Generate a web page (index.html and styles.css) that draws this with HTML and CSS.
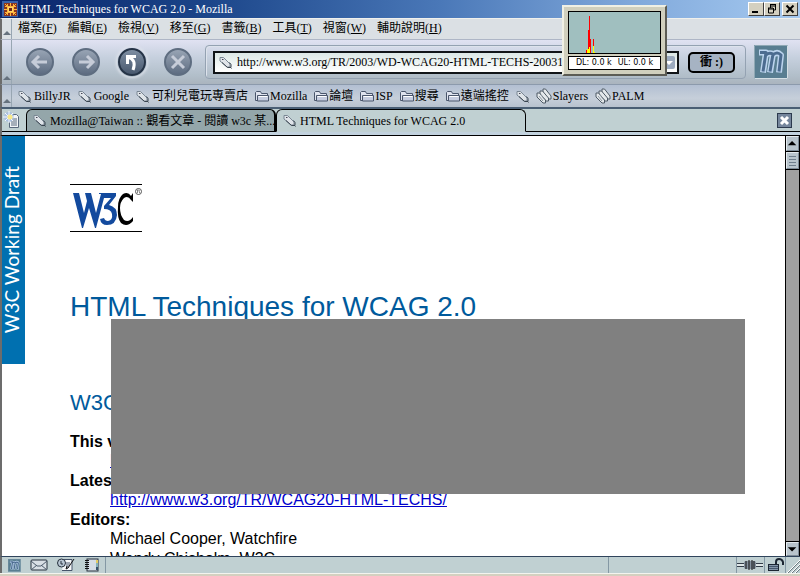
FILE: index.html
```html
<!DOCTYPE html>
<html lang="zh-Hant">
<head>
<meta charset="utf-8">
<title>HTML Techniques for WCAG 2.0 - Mozilla</title>
<link rel="stylesheet" href="styles.css">
</head>
<body>
<svg class="defs" aria-hidden="true">
  <defs>
    <linearGradient id="ball" x1="0" y1="0" x2="0" y2="1"><stop offset="0" stop-color="#9aa6b6"/><stop offset="1" stop-color="#5c6b80"/></linearGradient>
    <linearGradient id="ball-on" x1="0" y1="0" x2="0" y2="1"><stop offset="0" stop-color="#8090a4"/><stop offset="1" stop-color="#46566c"/></linearGradient>
    <symbol id="tag" viewBox="0 0 13 13"><path d="M1 1.500h3.500L11 8v3H8L1 5Z" fill="#dfe4e9" stroke="#7a8794"/><path d="m3 6.500 5.500 5H12V8.500l-1.500-2" fill="none" stroke="#39444f"/><path d="M11 11l1.500 1.500" stroke="#39444f"/><path d="M3 3.500h1.500" fill="none" stroke="#445"/></symbol>
    <symbol id="folder" viewBox="0 0 14 12"><path d="M.5 10.500v-8l1-1h4l1 2h6v7Z" fill="#dfe3ee" stroke="#4a566c"/><path d="M2.500 5.500h11v5.500h-11Z" fill="#c6cde0" stroke="#4a566c"/><path d="M3.500 6.500h9" stroke="#fff"/></symbol>
    <symbol id="tags" viewBox="0 0 16 16"><g fill="#e4e8eb" stroke="#4e5a66"><path d="M7 1h2.500l5.500 7v3h-2.500L7 5Z"/><path d="M4 3h2.500l6 7v3H10L4 7Z"/><path d="M1 5h2.500l6 7v3H7L1 9Z"/></g><path d="m3 8 4 5M5 7l4 5" stroke="#8d98a2"/></symbol>
    <symbol id="mozm" viewBox="0 0 34 34"><rect width="34" height="34" fill="#597e91"/><path d="M.5 33.500V.5h33" fill="none" stroke="#8fa8b4"/><path d="M33.500.5v33H.5" fill="none" stroke="#d4dfe4"/><g fill="none" stroke-linejoin="round"><g id="mozlegs"><path d="M5 7.500h7l-3 20M12 10q3-3 7-1l-3 18.500M19 10q4-4 8 0l-2 17.500" stroke="#bcd4ee" stroke-width="6"/></g><path d="M6 7.500h6l-3 19M12 10q3-3 7-1l-3 17.500M19 10q4-4 8 0l-2 16.500" stroke="#4c6c90" stroke-width="3"/></g></symbol>
  </defs>
</svg>

<header class="titlebar">
  <svg class="app-icon" viewBox="0 0 16 16" aria-hidden="true"><rect width="16" height="16" fill="#3b62a8"/><path d="M2 2h13v13H2Z" fill="#8a3520"/><path d="M3 5.500h11M3 11.500h11M5.500 3v11M11.500 3v11M8.500 2v13M2 8.500h13M3 3l11 11M14 3 3 14" stroke="#ffb53c"/><rect x="6" y="6" width="5" height="5" fill="#ffd76a"/><path d="M7 7h3v3H7Z" fill="#6d2418"/></svg>
  <span class="title">HTML Techniques for WCAG 2.0 - Mozilla</span>
  <div class="win-buttons">
    <button type="button" aria-label="Minimize"><svg viewBox="0 0 14 12"><path d="M3 9h6" stroke="#000" stroke-width="2"/></svg></button>
    <button type="button" aria-label="Restore"><svg viewBox="0 0 14 12"><path d="M5 1.500h6M5 3h6M5.500 2v3M10.500 2v5H9M3 5h5M3 6h5M3.500 5v5h5V5" fill="none" stroke="#000"/></svg></button>
    <button type="button" class="win-close" aria-label="Close"><svg viewBox="0 0 14 12"><path d="m3.500 2.500 7 7m0-7-7 7" stroke="#000" stroke-width="2"/></svg></button>
  </div>
</header>

<div class="bar menubar">
  <span class="grip"></span>
  <nav class="menu">
    <a href="#">檔案(<u>F</u>)</a><a href="#">編輯(<u>E</u>)</a><a href="#">檢視(<u>V</u>)</a><a href="#">移至(<u>G</u>)</a><a href="#">書籤(<u>B</u>)</a><a href="#">工具(<u>T</u>)</a><a href="#">視窗(<u>W</u>)</a><a href="#">輔助說明(<u>H</u>)</a>
  </nav>
</div>

<div class="bar navbar">
  <span class="grip"></span>
  <div class="nav-buttons">
    <button type="button" aria-label="Back"><svg viewBox="0 0 30 30"><circle cx="15" cy="15" r="13" fill="url(#ball)" stroke="#5e6d80" stroke-width="2"/><path d="M22 15H9m5-6-6 6 6 6" fill="none" stroke="#c6ccd8" stroke-width="3"/></svg></button>
    <button type="button" aria-label="Forward"><svg viewBox="0 0 30 30"><circle cx="15" cy="15" r="13" fill="url(#ball)" stroke="#5e6d80" stroke-width="2"/><path d="M8 15h13m-5-6 6 6-6 6" fill="none" stroke="#c6ccd8" stroke-width="3"/></svg></button>
    <button type="button" class="lit" aria-label="Reload"><svg viewBox="0 0 30 30"><circle cx="15" cy="15" r="13" fill="url(#ball-on)" stroke="#253346" stroke-width="2"/><path d="M10.500 17V9.500H19M11 10q9 3 5 13" fill="none" stroke="#fff" stroke-width="3"/></svg></button>
    <button type="button" aria-label="Stop"><svg viewBox="0 0 30 30"><circle cx="15" cy="15" r="13" fill="url(#ball)" stroke="#5e6d80" stroke-width="2"/><path d="m9 9 12 12m0-12L9 21" fill="none" stroke="#c6ccd8" stroke-width="3"/></svg></button>
  </div>
  <div class="location">
    <div class="url-box">
      <svg class="i13" aria-hidden="true"><use href="#tag"/></svg>
      <input type="text" aria-label="Location" value="http://www.w3.org/TR/2003/WD-WCAG20-HTML-TECHS-20031209/">
      <button type="button" class="drop" aria-label="History"><svg viewBox="0 0 13 15"><rect x="0" y="1" width="13" height="13" rx="2" fill="#9cabc0"/><path d="M3 6h8l-4 4Z" fill="#fff"/></svg></button>
    </div>
    <button type="button" class="go">衝 :)</button>
  </div>
  <svg class="throbber" role="img" aria-label="Mozilla"><use href="#mozm"/></svg>
</div>

<div class="bar bookmarks">
  <span class="grip"></span>
  <nav class="links">
    <a href="#"><svg class="i13"><use href="#tag"/></svg>BillyJR</a>
    <a href="#"><svg class="i13"><use href="#tag"/></svg>Google</a>
    <a href="#"><svg class="i13"><use href="#tag"/></svg>可利兒電玩專賣店</a>
    <a href="#" class="folder"><svg class="i14"><use href="#folder"/></svg>Mozilla</a>
    <a href="#" class="folder"><svg class="i14"><use href="#folder"/></svg>論壇</a>
    <a href="#" class="folder"><svg class="i14"><use href="#folder"/></svg>ISP</a>
    <a href="#" class="folder"><svg class="i14"><use href="#folder"/></svg>搜尋</a>
    <a href="#" class="folder"><svg class="i14"><use href="#folder"/></svg>遠端搖控</a>
    <a href="#" aria-label="Bookmark"><svg class="i13"><use href="#tag"/></svg></a>
    <a href="#" class="folder"><svg class="i16"><use href="#tags"/></svg>Slayers</a>
    <a href="#" class="folder"><svg class="i16"><use href="#tags"/></svg>PALM</a>
  </nav>
</div>

<div class="tabbar">
  <button type="button" class="new-tab" aria-label="New tab"><svg viewBox="0 0 18 18"><path d="M6.500 3.500h7l2 2v11h-9Z" fill="#f3f5f8" stroke="#59687c"/><path d="M8 8h6M8 10h6M8 12h6M8 14h6" stroke="#59687c"/><circle cx="6" cy="6" r="5" fill="#a9bfe0"/><path d="M6 0v12M0 6h12M2 2l8 8M10 2l-8 8" stroke="#f4f7ff"/><circle cx="7" cy="6" r="2.500" fill="#f8e88a"/></svg></button>
  <div class="tabs">
    <button type="button" class="tab"><svg class="i13"><use href="#tag"/></svg><span>Mozilla@Taiwan :: 觀看文章 - 閱讀 w3c 某...</span></button>
    <button type="button" class="tab active"><svg class="i13"><use href="#tag"/></svg><span>HTML Techniques for WCAG 2.0</span></button>
  </div>
  <button type="button" class="close-tab" aria-label="Close tab"><svg viewBox="0 0 15 15"><rect x=".5" y=".5" width="14" height="14" fill="#75869c" stroke="#2c3a4e"/><path d="m4 4 7 7m0-7-7 7" stroke="#fff" stroke-width="3"/></svg></button>
</div>

<div class="view">
  <main class="page">
    <div class="ribbon"><span>W3C Working Draft</span></div>
    <article class="doc">
      <svg class="w3c" viewBox="0 0 72 48" role="img" aria-label="W3C">
        <path d="M0 .5h72M0 47.500h72" stroke="#000"/>
        <g fill="#134a9e"><path d="M3 9h6l5 20 3-12-2-8h6l5 20 5-19h-2V9h17v3l-7 9q8 2 8 10-1 10-10 10-6 0-7-6l4-1q1 3 4 3 5-1 4-7-1-5-8-5v-3l7-8h-7l-8 30h-1l-6-20-6 20h-1Z"/></g>
        <path d="M63 9v9l-2-2q-3-5-7-2-4 4-4 10 0 7 4 12 5 3 9-3v4q-6 7-12 2-4-5-3-16 0-9 5-13 5-3 8 2Z" fill="#000"/>
        <circle cx="68.500" cy="7.500" r="3" fill="none" stroke="#555"/><path d="M67.500 9V6h1.500q1 1 0 2l1 1" fill="none" stroke="#555" stroke-width=".7"/>
      </svg>
      <h1>HTML Techniques for WCAG 2.0</h1>
      <h2>W3C Working Draft</h2>
      <dl>
        <dt>This version:</dt>
        <dd><a href="#">http://www.w3.org/TR/2003/WD-WCAG20-HTML-TECHS-20031209/</a></dd>
        <dt>Latest version:</dt>
        <dd><a href="#">http://www.w3.org/TR/WCAG20-HTML-TECHS/</a></dd>
        <dt>Editors:</dt>
        <dd>Michael Cooper, Watchfire</dd>
        <dd>Wendy Chisholm, W3C</dd>
      </dl>
    </article>
    <div class="blank-panel"></div>
  </main>
  <div class="scrollbar">
    <button type="button" aria-label="Scroll up"><svg viewBox="0 0 13 14"><path d="M1 9h10L6 4Z"/></svg></button>
    <div class="thumb"><i></i><i></i><i></i><i></i></div>
    <button type="button" class="down" aria-label="Scroll down"><svg viewBox="0 0 13 14"><path d="M1 5h10L6 10Z"/></svg></button>
  </div>
</div>

<footer class="status">
  <div class="cell components">
    <svg class="s13"><use href="#mozm"/></svg>
    <svg class="s18" viewBox="0 0 18 14"><rect x="1" y="2" width="16" height="10" rx="1" fill="#d9dfe5" stroke="#26303c"/><path d="m1 3 6 5h4l6-5M1 12l6-5M17 12l-6-5" fill="none" stroke="#4c5a6a"/></svg>
    <svg class="s18" viewBox="0 0 18 14"><path d="M7 1.500h8v11H5" fill="#f5f7f9" stroke="#46546a"/><path d="M9 5h4M9 7h4M9 9h3" stroke="#46546a"/><circle cx="4.500" cy="5" r="4" fill="#b7c5d2" stroke="#26303c"/><path d="M4 3v3h2" fill="none" stroke="#26303c"/><path d="m17 1-6 9-2 1 1-3" fill="none" stroke="#111"/></svg>
    <svg class="s16" viewBox="0 0 16 14"><rect x="3" y="1" width="11" height="12" fill="#d6dde6" stroke="#26303c"/><path d="M1 2.500h4M1 4.500h4M1 6.500h4M1 8.500h4M1 10.500h4" stroke="#111"/><path d="M13 2v3" stroke="#e5cb60" stroke-width="2"/><path d="M13 5v4" stroke="#87b2bc" stroke-width="2"/><path d="M13 9v3" stroke="#38526c" stroke-width="2"/></svg>
  </div>
  <div class="cell message"></div>
  <div class="cell progress"></div>
  <div class="cell plug"><svg viewBox="0 0 26 10"><path d="M0 3.500h7M19 3.500h7M0 6.500h7M19 6.500h7" stroke="#333d49"/><path d="M0 5h26" stroke="#fff"/><rect x="7" y="1" width="12" height="8" rx="2" fill="#8592a0"/><path d="M9 1v8M12 0v10M15 0v10M17 1v8" stroke="#111"/></svg></div>
  <div class="cell lock"><svg viewBox="0 0 18 14"><rect x="1.500" y="6.500" width="10" height="6" fill="#8495a8" stroke="#1c2632"/><path d="M2 8.500h9M2 10.500h9" stroke="#43556a"/><path d="M9 6V4q0-3 3-3t4 3v3" fill="none" stroke="#1c2632" stroke-width="2"/></svg></div>
  <svg class="resize" viewBox="0 0 14 14"><path d="M1 14 14 1M5 14l9-9M9 14l5-5" stroke="#fff"/><path d="M2 14 14 2M6 14l8-8M10 14l4-4" stroke="#6c7a80"/></svg>
</footer>
<div class="desk"></div>

<aside class="meter">
  <svg viewBox="0 0 93 43" role="img" aria-label="Traffic"><rect width="93" height="43"/><rect x="1" y="1" width="91" height="41" fill="#a0bfbf"/><path d="M18 39h1v3h-1ZM20 19h1V5h1v23h1v14h-3ZM25 28h1v7h-1Z" fill="#f00"/><path d="M19 38h1v4h-1ZM20 38h1v-2h1v6h-2ZM25 35h1v6h1v1h-2Z" fill="#ff0"/></svg>
  <div class="rates"><span>DL: 0.0 k</span><span>UL: 0.0 k</span></div>
</aside>
</body>
</html>
```
FILE: styles.css
```css
* { box-sizing: border-box; }
body {
  margin: 0;
  height: 100vh;
  display: flex;
  flex-direction: column;
  position: relative;
  overflow: hidden;
  background: #c0d0d2;
  color: #000;
  font: 12px/16px "Liberation Serif", "Noto Sans CJK TC", serif;
}
button, input { font: inherit; color: inherit; padding: 0; margin: 0; border: 0; background: none; }
button svg { display: block; width: 100%; height: 100%; }
a { color: inherit; text-decoration: none; }
.defs { position: absolute; width: 0; height: 0; }
.i13 { width: 13px; height: 13px; flex: none; }
.i14 { width: 14px; height: 12px; flex: none; }
.i16 { width: 16px; height: 16px; flex: none; }

.titlebar {
  height: 18px;
  display: flex;
  align-items: center;
  gap: 2px;
  padding: 0 2px;
  color: #fff;
  background: linear-gradient(90deg, #0a246a, #1a4488 25%, #4a78b8 55%, #82aadc 80%, #a6caf0);
}
.app-icon { width: 16px; height: 16px; }
.title { flex: 1; }
.win-buttons { display: flex; }
.win-buttons button {
  width: 16px;
  height: 14px;
  background: #d4d0c0;
  border: 1px solid;
  border-color: #fff #404040 #404040 #fff;
}
.win-buttons .win-close { margin-left: 2px; }

.bar { display: flex; border-left: 2px solid #6c6c6c; }
.grip {
  width: 10px;
  flex: none;
  border-right: 1px solid #98a6b2;
  display: flex;
  align-items: flex-end;
  justify-content: center;
  padding-bottom: 4px;
}
.grip::after {
  content: "";
  border: 4px solid transparent;
  border-top: 0;
  border-bottom: 4px solid #66727e;
}
.menubar {
  height: 22px;
  background: #dbe0e4;
  border-top: 1px solid #f0f0ec;
  border-bottom: 1px solid #aeb6c6;
}
.menu { display: flex; gap: 11px; padding: 0 6px; line-height: 18px; }

.navbar {
  height: 45px;
  align-items: center;
  background: linear-gradient(#e0e2f2, #c6d0de 40%, #b2bfca 80%, #aab4be);
  border-bottom: 1px solid #8c9aac;
}
.navbar .grip { align-self: stretch; }
.nav-buttons { display: flex; gap: 16px; padding: 0 12px 0 13px; }
.nav-buttons button { width: 30px; height: 30px; }
.nav-buttons .lit { border-radius: 50%; box-shadow: 0 0 3px 1px #e0e4ec; }
.location {
  flex: 1;
  height: 34px;
  display: flex;
  align-items: center;
  gap: 9px;
  padding: 0 10px 0 7px;
  border: 1px solid #94a2b2;
  border-radius: 4px;
  box-shadow: inset 1px 1px #dde3ec;
}
.url-box {
  flex: 1;
  height: 23px;
  display: flex;
  align-items: center;
  gap: 5px;
  padding: 0 2px 0 4px;
  border: 2px solid #101418;
  background: linear-gradient(#dce8e6, #fff);
}
.url-box input { flex: 1; min-width: 0; height: 18px; outline: 0; }
.drop { width: 13px; height: 15px; }
.go {
  width: 47px;
  height: 21px;
  border: 2px solid #000;
  border-radius: 5px;
  background: #a6b3c3;
  line-height: 16px;
  font-weight: bold;
}
.throbber { width: 34px; height: 34px; margin: 0 12px 0 8px; flex: none; }

.bookmarks {
  height: 22px;
  background: linear-gradient(#b2bfd2, #c6cfda 60%, #b8c2ce);
}
.links { display: flex; align-items: center; gap: 7px; padding: 0 6px; white-space: nowrap; }
.links a { display: flex; align-items: center; gap: 3px; }
.links .folder { gap: 1px; }

.tabbar {
  height: 28px;
  display: flex;
  padding-right: 8px;
  border-left: 2px solid #6c6c6c;
  border-top: 2px solid #4a5e74;
  background: linear-gradient(#c0d0d2 22px, #000 22px, #000 23px, #c2d2de 23px);
}
.new-tab { width: 18px; height: 18px; margin: 2px 5px 0 1px; }
.tabs { display: flex; flex: 1; align-items: flex-start; }
.tab {
  width: 250px;
  height: 23px;
  display: flex;
  align-items: center;
  gap: 4px;
  padding: 0 6px;
  border: 1px solid #000;
  border-right-width: 2px;
  border-radius: 6px 6px 0 0;
  background: #94a6aa;
  line-height: 20px;
  white-space: nowrap;
}
.tab.active { background: #c0d0d2; border-bottom-color: #c0d0d2; border-right-width: 1px; }
.close-tab { width: 15px; height: 15px; margin-top: 4px; }

.view { flex: 1; min-height: 0; display: flex; border-top: 1px solid #000; border-left: 2px solid #6c6c6c; }
.page {
  flex: 1;
  position: relative;
  display: flex;
  overflow: hidden;
  background: #fff;
  font: 16px/20px "Liberation Sans", sans-serif;
}
.ribbon {
  width: 23px;
  height: 228px;
  flex: none;
  display: flex;
  align-items: center;
  justify-content: center;
  padding-right: 3px;
  background: #0070b0;
  color: #fff;
  font: 19px/20px Lato, sans-serif;
}
.ribbon span { writing-mode: vertical-rl; transform: rotate(180deg); white-space: nowrap; }
.doc { flex: 1; padding: 48px 0 0 45px; }
.w3c { display: block; width: 72px; height: 48px; }
h1, h2 { margin: 0; font-weight: normal; color: #005a9c; }
h1 { margin-top: 59px; font-size: 28px; line-height: 32px; }
h2 { margin-top: 68px; font-size: 22px; line-height: 24px; }
dl { margin: 17px 0 0; }
dt { font-weight: bold; line-height: 19px; }
dd { margin: 0 0 0 40px; line-height: 20px; }
.doc a { color: #0000cc; text-decoration: underline; }
.blank-panel { position: absolute; top: 183px; left: 109px; right: 40px; height: 175px; background: #808080; }

.scrollbar {
  width: 15px;
  display: flex;
  flex-direction: column;
  border-left: 1px solid #000;
  border-right: 1px solid #000;
  background: #a0a0a0;
}
.scrollbar button, .thumb {
  height: 15px;
  background: #b8c4cc;
  border: 1px solid;
  border-color: #e4eaee #7c8a96 #7c8a96 #e4eaee;
  box-shadow: 0 1px #000;
}
.thumb { height: 17px; margin-top: 1px; display: flex; flex-direction: column; justify-content: center; gap: 2px; padding: 0 2px; }
.thumb i { height: 1px; background: #6e7e8c; }
.scrollbar .down { margin-top: auto; height: 14px; box-shadow: 0 -1px #000; }

.status {
  height: 17px;
  display: flex;
  border-top: 1px solid #30445c;
  border-left: 2px solid #6c6c6c;
  background: #c0d0d2;
}
.cell { display: flex; align-items: center; border-right: 1px solid #8498a4; }
.components { width: 104px; gap: 9px; padding-left: 6px; }
.s13 { width: 13px; height: 13px; }
.s18 { width: 18px; height: 14px; }
.s16 { width: 16px; height: 14px; }
.message { flex: 1; }
.progress { width: 128px; }
.plug { width: 28px; }
.plug svg { width: 26px; height: 10px; }
.lock { width: 21px; padding-left: 2px; }
.lock svg { width: 18px; height: 14px; }
.resize { width: 14px; height: 14px; align-self: flex-end; }
.desk { height: 3px; border-top: 1px solid #f4f4ee; background: #d4d0c0; }

.meter {
  position: absolute;
  top: 5px;
  right: 133px;
  width: 105px;
  padding: 4px;
  display: flex;
  flex-direction: column;
  gap: 2px;
  background: #d0cfbd;
  border: 2px solid;
  border-color: #f0f0e4 #5c5c54 #5c5c54 #f0f0e4;
}
.meter svg { display: block; width: 93px; height: 43px; }
.rates {
  height: 14px;
  display: flex;
  justify-content: center;
  gap: 6px;
  border: 1px solid #000;
  background: #fff;
  font: 8px/12px "DejaVu Sans", sans-serif;
}
```
